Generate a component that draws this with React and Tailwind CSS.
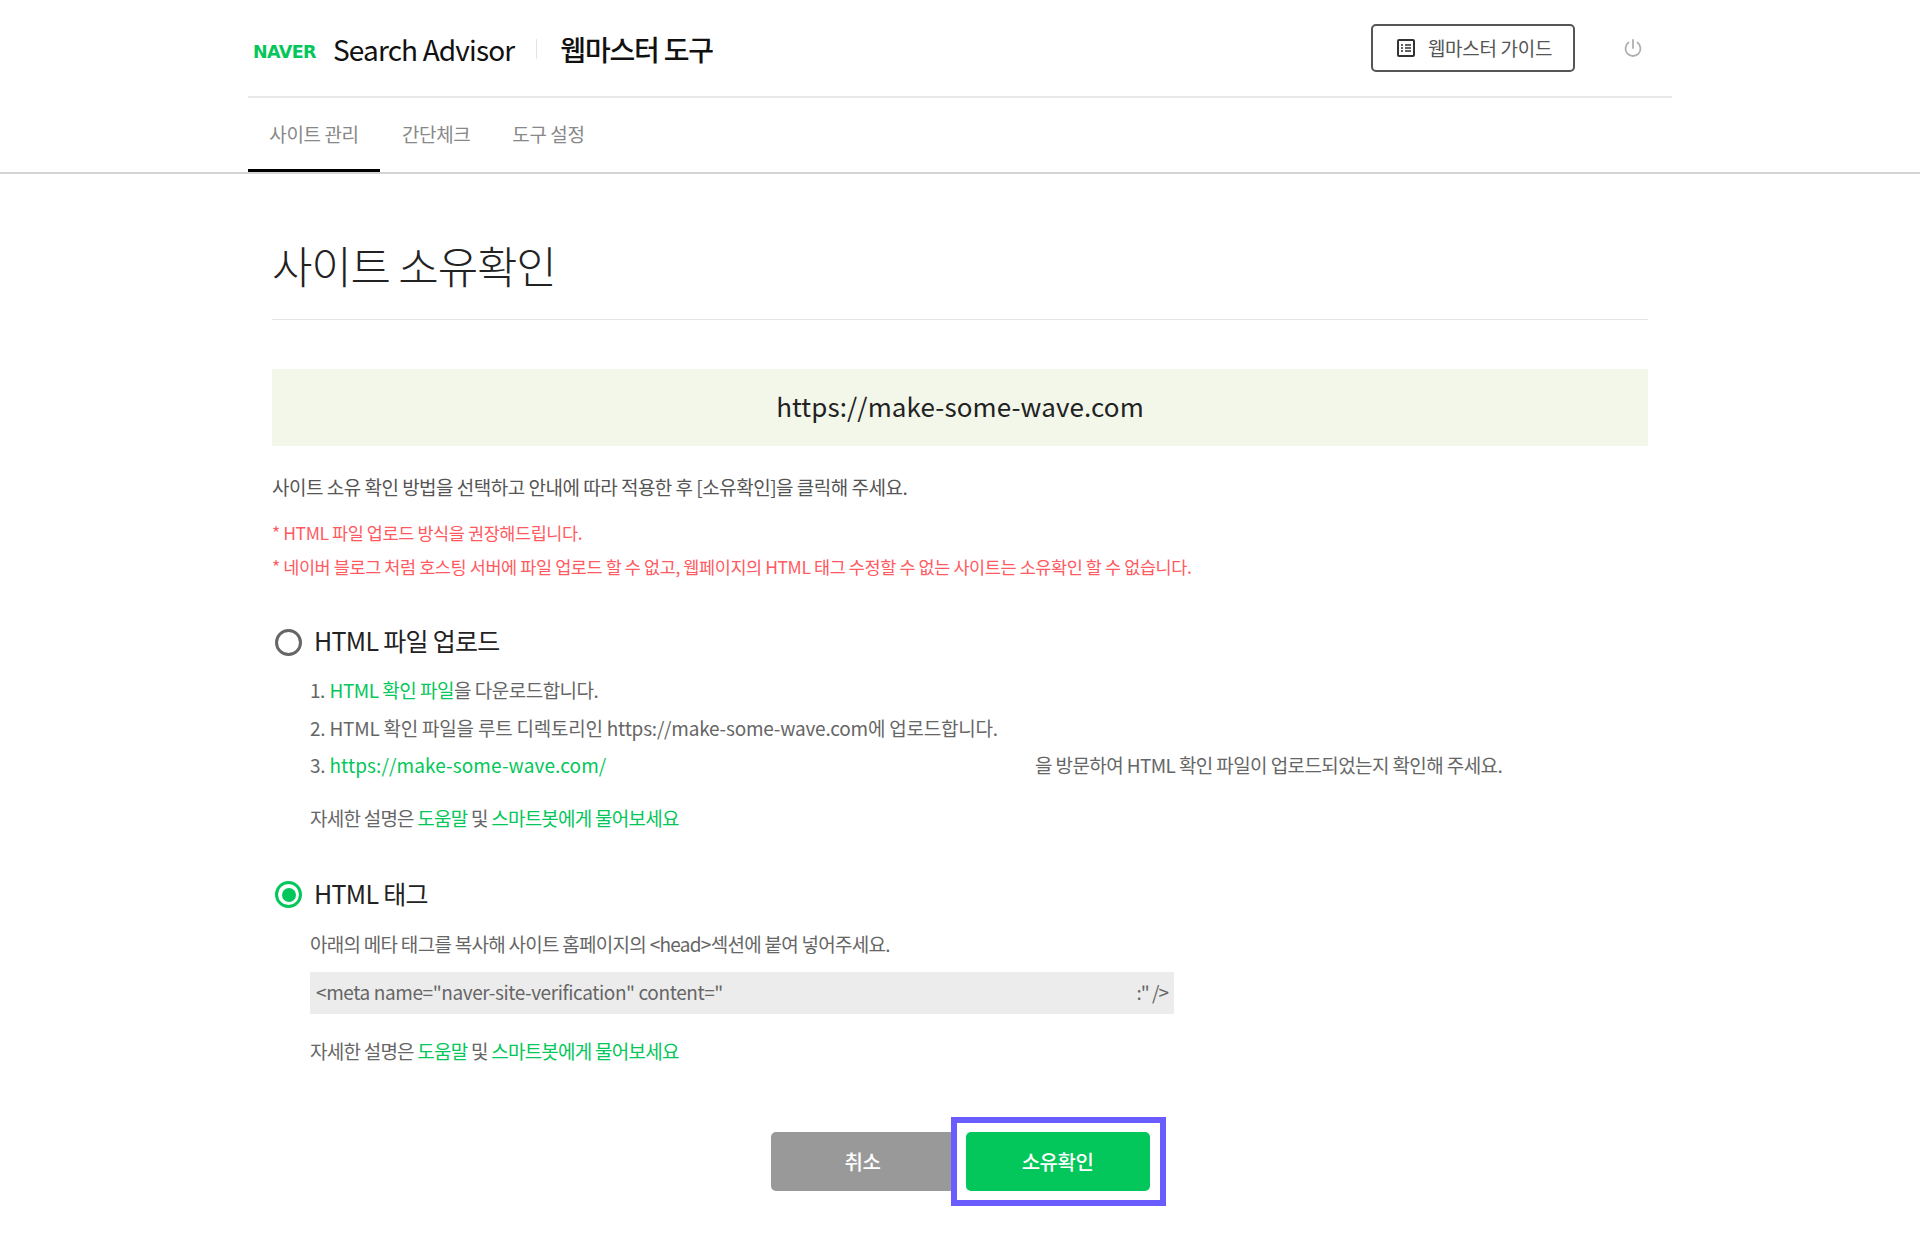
// Naver Search Advisor - site ownership check page

const HelpLine = () => (
  <p className="text-[19px] leading-[26px] tracking-[-0.76px] text-[#666]">
    자세한 설명은 <a className="text-[#03c75a]">도움말</a> 및 <a className="text-[#03c75a]">스마트봇에게 물어보세요</a>
  </p>
);

const Radio = ({ checked, label }) => (
  <div className="flex items-center h-[32px]">
    <span className={`flex items-center justify-center w-[27px] h-[27px] rounded-full border-[3px] ml-[3px] ${checked ? 'border-[#03c75a]' : 'border-[#666]'}`}>
      {checked && <span className="w-[14px] h-[14px] rounded-full bg-[#03c75a]" />}
    </span>
    <span className="ml-[12px] pb-[2px] text-[25px] tracking-[-0.7px] text-[#222]">{label}</span>
  </div>
);

export default function App() {
  return (
    <div className="h-[1234px] overflow-hidden bg-white font-['Noto_Sans_CJK_KR','Noto_Sans',sans-serif]">
      <header className="border-b-2 border-[#d4d4d4]">
        <div className="w-[1424px] ml-[248px]">
          <div className="flex items-center justify-between h-[98px] border-b-2 border-[#e8e8e8]">
            <div className="flex items-center pt-[2px]">
              <span className="ml-[5px] mt-[7px] font-['DejaVu_Sans',sans-serif] font-black text-[17.5px] leading-none tracking-[-0.6px] text-[#03c75a]">NAVER</span>
              <span className="ml-[17px] text-[28px] tracking-[-0.85px] text-[#111]">Search Advisor</span>
              <span className="ml-[22px] w-px h-[20px] bg-[#e4e4e4]" />
              <span className="ml-[23px] text-[28px] font-medium tracking-[-1.2px] text-[#111]">웹마스터 도구</span>
            </div>
            <div className="flex items-center mr-[29px]">
              <button className="flex items-center justify-center w-[204px] h-[48px] pl-[2px] border-2 border-[#555] rounded-[5px] bg-white">
                <svg width="20" height="20" viewBox="0 0 20 20" fill="none" stroke="#333" className="mr-[12px]">
                  <rect x="2" y="2" width="16" height="16" rx="1" strokeWidth="2" />
                  <path d="M5 7h2M9 7h6M5 10h2M9 10h6M5 13h2M9 13h6" strokeWidth="1.6" />
                </svg>
                <span className="text-[19px] tracking-[-0.3px] text-[#555]">웹마스터 가이드</span>
              </button>
              <svg width="20" height="20" viewBox="0 0 20 20" fill="none" stroke="#b0b0b0" strokeWidth="1.8" strokeLinecap="round" className="ml-[48px]">
                <path d="M10 2v8" />
                <path d="M5.5 4.5a7.5 7.5 0 1 0 9 0" />
              </svg>
            </div>
          </div>
          <nav className="flex h-[74px]">
            <a className="flex items-center justify-center w-[132px] h-[74px] border-b-[3px] border-black pt-[1px] text-[19px] tracking-[-0.4px] text-[#888]">사이트 관리</a>
            <a className="flex items-center ml-[22px] h-[74px] pb-[2px] text-[19px] tracking-[-0.4px] text-[#888]">간단체크</a>
            <a className="flex items-center ml-[42px] h-[74px] pb-[2px] text-[19px] tracking-[-0.4px] text-[#888]">도구 설정</a>
          </nav>
        </div>
      </header>

      <main className="w-[1376px] ml-[272px]">
        <h1 className="flex items-center h-[146px] pt-[36px] border-b border-[#e4e4e4] text-[44px] font-light tracking-[-1.2px] text-[#222]">사이트 소유확인</h1>

        <div className="flex items-center justify-center h-[77px] mt-[49px] pb-[5px] bg-[#f2f7ea] text-[26px] tracking-[0.1px] text-[#222]">https://make-some-wave.com</div>

        <p className="mt-[26px] h-[30px] leading-[30px] text-[19px] tracking-[-0.5px] text-[#555]">사이트 소유 확인 방법을 선택하고 안내에 따라 적용한 후 [소유확인]을 클릭해 주세요.</p>
        <p className="mt-[14px] h-[34px] leading-[34px] text-[17.5px] tracking-[-0.42px] text-[#ff5a5f]">* HTML 파일 업로드 방식을 권장해드립니다.</p>
        <p className="h-[34px] leading-[34px] text-[17.5px] tracking-[-0.42px] text-[#ff5a5f]">* 네이버 블로그 처럼 호스팅 서버에 파일 업로드 할 수 없고, 웹페이지의 HTML 태그 수정할 수 없는 사이트는 소유확인 할 수 없습니다.</p>

        <div className="mt-[42px]">
          <Radio label="HTML 파일 업로드" />
          <div className="ml-[38px] mt-[16px] text-[19px] tracking-[-0.22px] text-[#666]">
            <p className="h-[37.5px] leading-[32px] tracking-[-0.5px]">1. <a className="ml-[1px] text-[#03c75a]">HTML 확인 파일</a>을 다운로드합니다.</p>
            <p className="h-[37.5px] leading-[32px]">2. HTML 확인 파일을 루트 디렉토리인 https://make-some-wave.com에 업로드합니다.</p>
            <p className="flex h-[37.5px] leading-[32px]">
              <span className="w-[725px]">3. <a className="text-[#03c75a] tracking-[0.1px]">https://make-some-wave.com/</a></span>
              <span className="tracking-[-0.6px]">을 방문하여 HTML 확인 파일이 업로드되었는지 확인해 주세요.</span>
            </p>
            <div className="mt-[18px]"><HelpLine /></div>
          </div>
        </div>

        <div className="mt-[48px]">
          <Radio checked label="HTML 태그" />
          <div className="ml-[38px] mt-[20px]">
            <p className="h-[26px] leading-[26px] text-[19px] tracking-[-0.72px] text-[#666]">아래의 메타 태그를 복사해 사이트 홈페이지의 &lt;head&gt;섹션에 붙여 넣어주세요.</p>
            <div className="flex items-center justify-between w-[864px] h-[42px] mt-[15px] px-[6px] bg-[#ececec] text-[19px] tracking-[-0.4px] text-[#666]">
              <span>&lt;meta name="naver-site-verification" content="</span>
              <span className="tracking-[-1px]">:" /&gt;</span>
            </div>
            <div className="mt-[24px]"><HelpLine /></div>
          </div>
        </div>

        <div className="flex justify-center mt-[68px]">
          <button className="w-[184px] h-[59px] pt-[1px] rounded-[5px] bg-[#999] text-[20px] font-medium tracking-[-0.5px] text-white">취소</button>
          <div className="relative ml-[11px] w-[184px] h-[59px]">
            <span className="absolute -inset-y-[15px] -left-[15px] -right-[16px] border-[6px] border-[#6b5cff] bg-white" />
            <button className="relative w-full h-full pt-[1px] rounded-[5px] bg-[#03c75a] text-[20px] font-medium tracking-[-0.5px] text-white">소유확인</button>
          </div>
        </div>
      </main>
    </div>
  );
}
